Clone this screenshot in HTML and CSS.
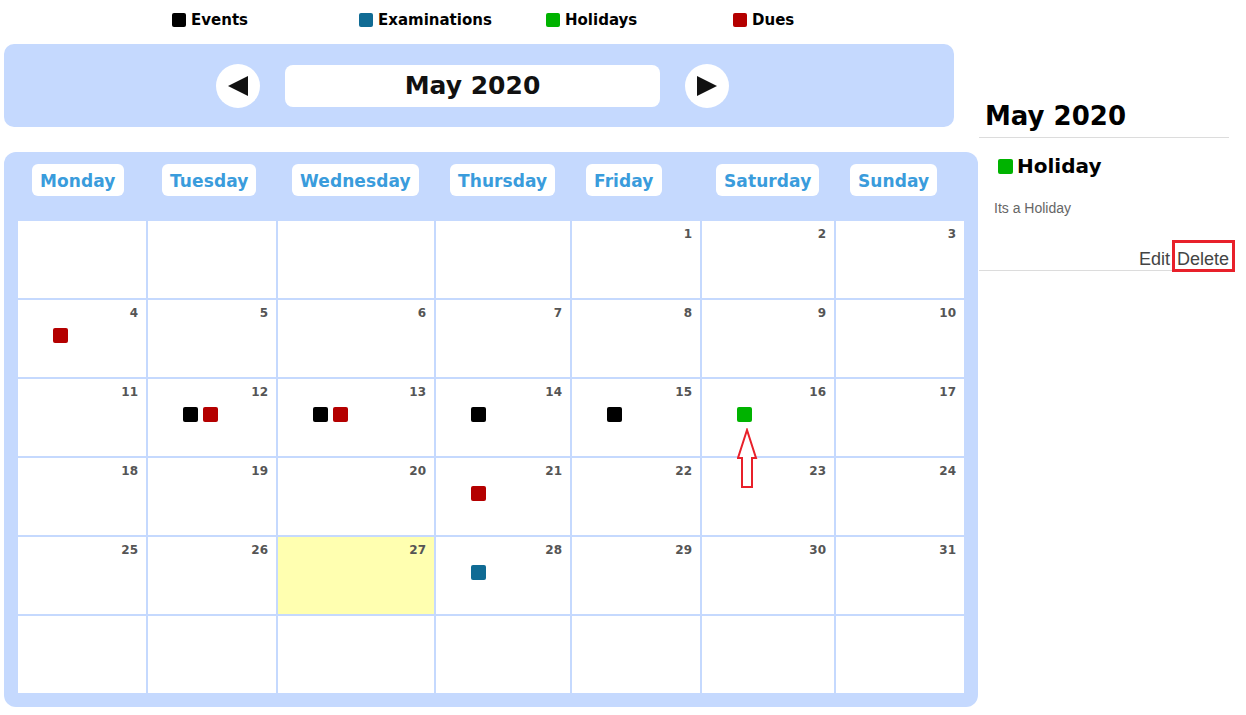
FILE: index.html
```html
<!DOCTYPE html>
<html>
<head>
<meta charset="utf-8">
<link rel="stylesheet" href="styles.css">
</head>
<body>
<div class="page">
  <div class="main">
    <div class="legend">
      <div class="legend-item"><span class="sq event"></span>Events</div>
      <div class="legend-item"><span class="sq exam"></span>Examinations</div>
      <div class="legend-item"><span class="sq holiday"></span>Holidays</div>
      <div class="legend-item"><span class="sq dues"></span>Dues</div>
    </div>
    <div class="head">
      <button class="nav-btn"><svg width="22" height="22" viewBox="0 0 22 22"><polygon points="1,11 21,1 21,21" fill="#111"/></svg></button>
      <div class="month-title">May 2020</div>
      <button class="nav-btn"><svg width="22" height="22" viewBox="0 0 22 22"><polygon points="21,11 1,1 1,21" fill="#111"/></svg></button>
    </div>
    <div class="cal">
      <table class="grid">
        <colgroup>
          <col class="c-a"><col class="c-a"><col class="c-c"><col class="c-d"><col class="c-a"><col class="c-f"><col class="c-a">
        </colgroup>
        <thead>
          <tr>
            <th><span class="pill">Monday</span></th>
            <th><span class="pill">Tuesday</span></th>
            <th><span class="pill">Wednesday</span></th>
            <th><span class="pill">Thursday</span></th>
            <th><span class="pill">Friday</span></th>
            <th><span class="pill">Saturday</span></th>
            <th><span class="pill">Sunday</span></th>
          </tr>
        </thead>
        <tbody>
          <tr>
            <td></td><td></td><td></td><td></td>
            <td><div class="num">1</div></td>
            <td><div class="num">2</div></td>
            <td><div class="num">3</div></td>
          </tr>
          <tr>
            <td><div class="num">4</div><div class="dots"><span class="sq dues"></span></div></td>
            <td><div class="num">5</div></td>
            <td><div class="num">6</div></td>
            <td><div class="num">7</div></td>
            <td><div class="num">8</div></td>
            <td><div class="num">9</div></td>
            <td><div class="num">10</div></td>
          </tr>
          <tr>
            <td><div class="num">11</div></td>
            <td><div class="num">12</div><div class="dots"><span class="sq event"></span><span class="sq dues"></span></div></td>
            <td><div class="num">13</div><div class="dots"><span class="sq event"></span><span class="sq dues"></span></div></td>
            <td><div class="num">14</div><div class="dots"><span class="sq event"></span></div></td>
            <td><div class="num">15</div><div class="dots"><span class="sq event"></span></div></td>
            <td class="marked"><div class="num">16</div><div class="dots"><span class="sq holiday"></span></div>
              <svg class="pointer" width="22" height="62" viewBox="0 0 22 62"><polygon points="10,2 1,30 5,30 5,59 15,59 15,30 19,30" fill="#fff" stroke="#e8202a" stroke-width="2"/></svg>
            </td>
            <td><div class="num">17</div></td>
          </tr>
          <tr>
            <td><div class="num">18</div></td>
            <td><div class="num">19</div></td>
            <td><div class="num">20</div></td>
            <td><div class="num">21</div><div class="dots"><span class="sq dues"></span></div></td>
            <td><div class="num">22</div></td>
            <td><div class="num">23</div></td>
            <td><div class="num">24</div></td>
          </tr>
          <tr>
            <td><div class="num">25</div></td>
            <td><div class="num">26</div></td>
            <td class="today"><div class="num">27</div></td>
            <td><div class="num">28</div><div class="dots"><span class="sq exam"></span></div></td>
            <td><div class="num">29</div></td>
            <td><div class="num">30</div></td>
            <td><div class="num">31</div></td>
          </tr>
          <tr>
            <td></td><td></td><td></td><td></td><td></td><td></td><td></td>
          </tr>
        </tbody>
      </table>
    </div>
  </div>
  <aside class="side">
    <h2 class="side-title">May 2020</h2>
    <div class="detail">
      <div class="detail-title"><span class="sq holiday big"></span>Holiday</div>
      <p class="detail-desc">Its a Holiday</p>
      <div class="actions"><span class="act">Edit</span> <span class="act act-delete">Delete</span></div>
    </div>
  </aside>
</div>
</body>
</html>
```

FILE: styles.css
```css
* { box-sizing: border-box; }
html, body { margin: 0; padding: 0; background: #fff; }
body { font-family: "DejaVu Sans", Verdana, sans-serif; color: #111; }

.page { display: flex; padding-left: 4px; width: 1246px; }
.main { width: 974px; flex: none; }

.legend { display: flex; height: 44px; padding-top: 11px; padding-left: 168px; }
.legend-item { width: 187px; display: flex; align-items: center; height: 18px; font-size: 15px; line-height: 18px; font-weight: bold; color: #000; }
.legend-item .sq { width: 14px; height: 14px; margin-right: 5px; }

.sq { display: inline-block; width: 15px; height: 15px; border-radius: 2px; }
.event { background: #000; }
.exam { background: #106b94; }
.holiday { background: #00b300; }
.dues { background: #b40000; }

.head { width: 950px; height: 83px; background: #c5d9fe; border-radius: 10px; display: flex; align-items: center; justify-content: center; gap: 25px; padding-right: 13px; margin-bottom: 25px; }
.nav-btn { width: 44px; height: 44px; border-radius: 50%; border: none; background: #fff; padding: 0; display: flex; align-items: center; justify-content: center; }
.nav-btn svg { display: block; }
.month-title { width: 375px; height: 42px; background: #fff; border-radius: 8px; display: flex; align-items: center; justify-content: center; font-size: 25px; font-weight: bold; color: #111; }

.cal { width: 974px; background: #c5d9fe; border-radius: 12px; padding: 10px 12px 12px; }
.grid { border-collapse: separate; border-spacing: 2px; table-layout: fixed; width: 950px; }
.c-a { width: 128px; }
.c-c { width: 156px; }
.c-d { width: 134px; }
.c-f { width: 132px; }
.grid th { text-align: left; vertical-align: top; padding: 0 0 23px 14px; height: 55px; }
.pill { display: inline-block; height: 32px; line-height: 32px; padding: 1px 8px 0; background: #fff; border-radius: 6px; color: #3a9cdc; font-size: 17px; font-weight: bold; letter-spacing: 0.1px; }
.grid tbody tr { height: 77px; }
.grid td { background: #fff; vertical-align: top; padding: 6px 8px 0 0; height: 77px; position: relative; }
.grid td.today { background: #ffffb0; }
.num { text-align: right; font-size: 12px; line-height: 15px; font-weight: bold; color: #555; }
.dots { display: flex; gap: 5px; margin-top: 7px; padding-left: 35px; }
.pointer { position: absolute; left: 35px; top: 49px; z-index: 2; }

.side { flex: 1; padding: 101px 17px 0 1px; }
.side-title { margin: 0; font-size: 26px; line-height: 30px; font-weight: bold; color: #000; padding: 0 0 6px 6px; border-bottom: 1px solid #dcdcdc; }
.detail { border-bottom: 1px solid #dcdcdc; }
.detail-title { display: flex; align-items: center; gap: 4px; margin-top: 16px; padding-left: 19px; font-size: 20px; line-height: 24px; font-weight: bold; color: #000; }
.detail-desc { margin: 22px 0 0; padding-left: 15px; font-family: "Liberation Sans", Arial, sans-serif; font-size: 14px; line-height: 16px; color: #666; }
.actions { margin-top: 33px; text-align: right; font-family: "Liberation Sans", Arial, sans-serif; font-size: 18px; line-height: 21px; color: #444; word-spacing: 2px; }
.act-delete { position: relative; }
.act-delete::after { content: ""; position: absolute; left: -5px; right: -6px; top: -9px; bottom: -3px; border: 3px solid #e8202a; }
```
